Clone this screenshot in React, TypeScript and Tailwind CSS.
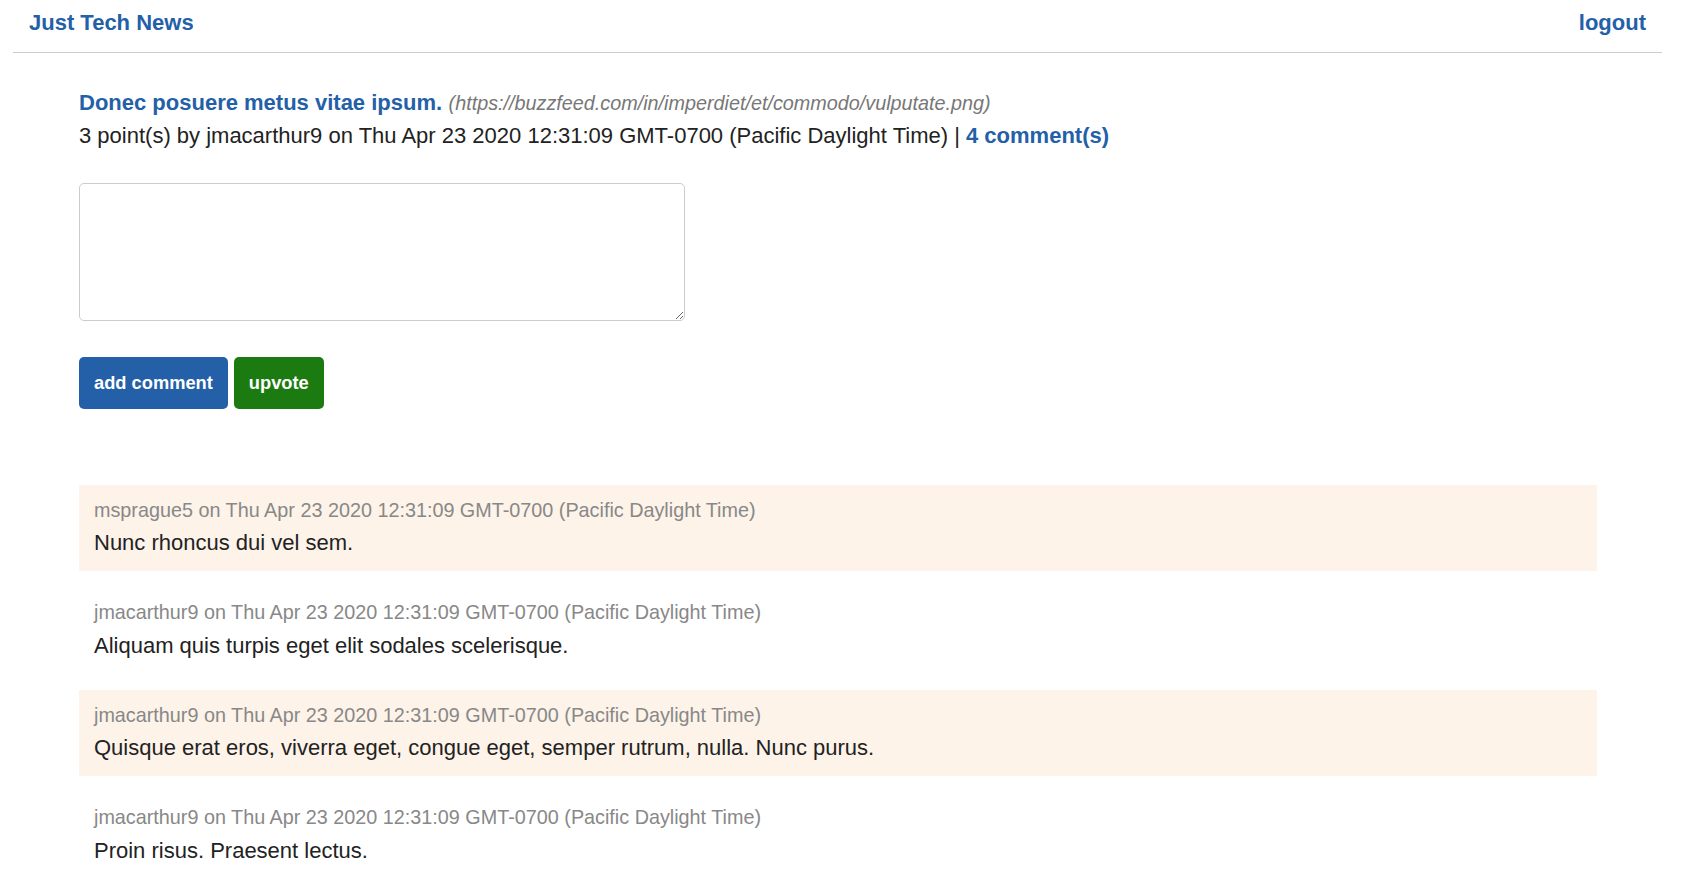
import React from "react";

const comments = [
  { user: "msprague5", text: "Nunc rhoncus dui vel sem." },
  { user: "jmacarthur9", text: "Aliquam quis turpis eget elit sodales scelerisque." },
  { user: "jmacarthur9", text: "Quisque erat eros, viverra eget, congue eget, semper rutrum, nulla. Nunc purus." },
  { user: "jmacarthur9", text: "Proin risus. Praesent lectus." },
];

const DATE = "Thu Apr 23 2020 12:31:09 GMT-0700 (Pacific Daylight Time)";

export default function App() {
  return (
    <div className="min-h-screen bg-white pl-[13px] pr-[20px] font-['Liberation_Sans',Arial,sans-serif] text-[#222]">
      <header className="flex items-center justify-between border-b border-[#cccccc] px-[16px] pt-[10px] pb-[16px]">
        <a href="#" className="text-[22px] font-bold leading-[normal] text-[#2360a8]">
          Just Tech News
        </a>
        <a href="#" className="text-[22px] font-bold leading-[normal] text-[#2360a8]">
          logout
        </a>
      </header>

      <main className="ml-[66px] mr-[65px]">
        <div className="mt-[37px] leading-[25px]">
          <a href="#" className="text-[22px] font-bold text-[#2360a8]">
            Donec posuere metus vitae ipsum.
          </a>{" "}
          <span className="ml-[2px] text-[19.8px] italic text-[#777]">
            (https://buzzfeed.com/in/imperdiet/et/commodo/vulputate.png)
          </span>
        </div>
        <div className="mt-[6px] text-[22px] leading-[25px] text-[#222]">
          3 point(s) by jmacarthur9 on {DATE} |{" "}
          <a href="#" className="font-bold text-[#2360a8]">
            4 comment(s)
          </a>
        </div>

        <textarea className="mt-[35px] block h-[138px] w-[606px] rounded-[5px] border border-[#cccccc] bg-white p-[6px] text-[18px] outline-none" />

        <div className="mt-[36px] flex gap-[6px]">
          <button className="h-[52px] rounded-[5px] bg-[#2360a8] px-[15px] text-[18.3px] font-bold text-white">
            add comment
          </button>
          <button className="h-[52px] rounded-[5px] bg-[#1c7b10] px-[15px] text-[18.3px] font-bold text-white">
            upvote
          </button>
        </div>

        <div className="mt-[76px]">
          {comments.map((c, i) => (
            <div
              key={i}
              className={
                i % 2 === 0
                  ? "mb-[16px] bg-[#fdf3e9] px-[15px] pt-[14px] pb-[16px]"
                  : "mb-[16px] bg-white px-[15px] pt-[14px] pb-[16px]"
              }
            >
              <div className="mb-[9px] text-[19.8px] leading-[22.4px] text-[#888]">
                {c.user} on {DATE}
              </div>
              <div className="text-[22px] leading-[25px] text-[#222]">{c.text}</div>
            </div>
          ))}
        </div>
      </main>
    </div>
  );
}
